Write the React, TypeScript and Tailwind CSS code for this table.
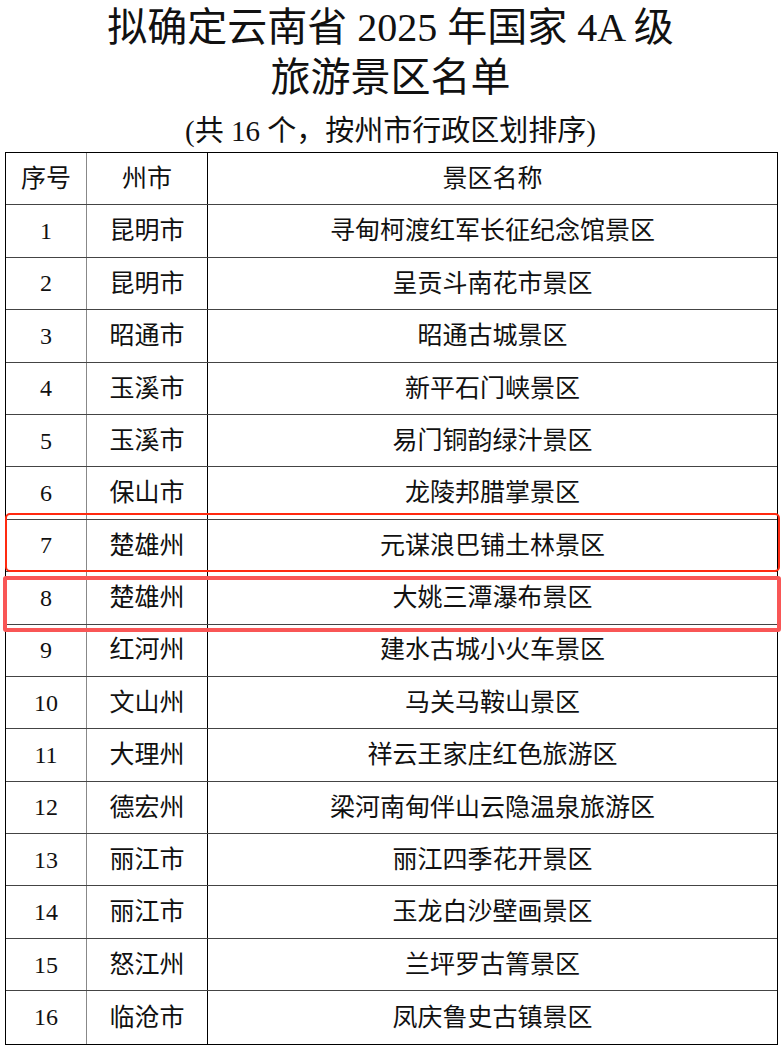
import React from "react";

const rows: [string, string, string][] = [
  ["1", "昆明市", "寻甸柯渡红军长征纪念馆景区"],
  ["2", "昆明市", "呈贡斗南花市景区"],
  ["3", "昭通市", "昭通古城景区"],
  ["4", "玉溪市", "新平石门峡景区"],
  ["5", "玉溪市", "易门铜韵绿汁景区"],
  ["6", "保山市", "龙陵邦腊掌景区"],
  ["7", "楚雄州", "元谋浪巴铺土林景区"],
  ["8", "楚雄州", "大姚三潭瀑布景区"],
  ["9", "红河州", "建水古城小火车景区"],
  ["10", "文山州", "马关马鞍山景区"],
  ["11", "大理州", "祥云王家庄红色旅游区"],
  ["12", "德宏州", "梁河南甸伴山云隐温泉旅游区"],
  ["13", "丽江市", "丽江四季花开景区"],
  ["14", "丽江市", "玉龙白沙壁画景区"],
  ["15", "怒江州", "兰坪罗古箐景区"],
  ["16", "临沧市", "凤庆鲁史古镇景区"],
];

const font = { fontFamily: '"Liberation Serif", "Noto Sans CJK SC", serif' };

export default function App() {
  return (
    <div
      className="relative w-[781px] h-[1046px] bg-white text-[#111] overflow-hidden"
      style={font}
    >
      <div className="pt-[3px] text-center text-[40px] leading-[50px]">
        <div>拟确定云南省 2025 年国家 4A 级</div>
        <div>旅游景区名单</div>
      </div>
      <div className="mt-[10px] text-center text-[29px] leading-[36px]">
        (共 16 个，按州市行政区划排序)
      </div>
      <div className="mt-[3px] ml-[5px] w-[773px] border border-black">
        {[["序号", "州市", "景区名称"] as [string, string, string], ...rows].map(
          (r, i) => (
            <div
              key={i}
              className={`grid grid-cols-[81px_121px_1fr] h-[52.4px] text-[25px] ${
                i < rows.length ? "border-b border-[#444]" : ""
              }`}
            >
              <div
                className={`flex items-center justify-center border-r border-[#888] ${
                  i === 0 ? "" : "text-[24px]"
                }`}
              >
                {r[0]}
              </div>
              <div className="flex items-center justify-center border-r border-black">
                {r[1]}
              </div>
              <div className="flex items-center justify-center">{r[2]}</div>
            </div>
          )
        )}
      </div>
      <div className="absolute left-[5px] top-[513px] w-[775px] h-[59px] border-2 border-[#ff2a10] rounded-[5px]" />
      <div className="absolute left-[3px] top-[576px] w-[778px] h-[56px] border-4 border-[#f95656] rounded-[3px]" />
    </div>
  );
}
